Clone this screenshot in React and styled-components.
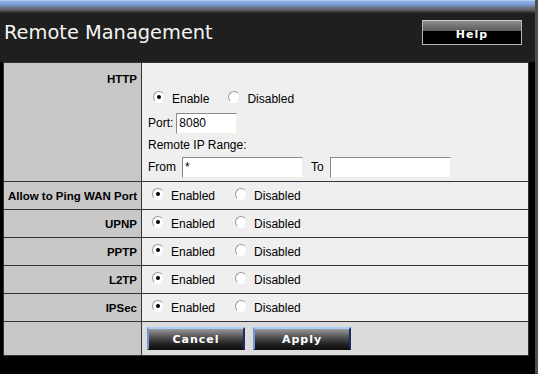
import React from 'react';
import styled, { createGlobalStyle } from 'styled-components';

const Global = createGlobalStyle`
  html, body {
    margin: 0;
    padding: 0;
    background: #000;
  }
  body {
    width: 538px;
    height: 374px;
    overflow: hidden;
    font-family: "Liberation Sans", Arial, sans-serif;
  }
`;

const Screen = styled.div`
  display: flex;
  width: 538px;
  height: 374px;
  background: #000;
`;

const Main = styled.div`
  width: 535px;
  display: flex;
  flex-direction: column;
`;

const Strip = styled.div`
  width: 3px;
  background: repeating-linear-gradient(to bottom, #5a5a5a 0, #5a5a5a 1px, #444 1px, #444 2px);
`;

const TopBand = styled.div`
  height: 13px;
  background: linear-gradient(to bottom, #d8e8d8 0, #8cb0ee 1px, #7d9fdc 4px, #6c7c98 7px, #5e5e62 10px, #3a3a3a 12px, #222 13px);
`;

const Header = styled.div`
  height: 49px;
  background: #1f1f1f;
  display: flex;
  align-items: flex-start;
  justify-content: space-between;
  padding: 0 13px 0 4px;
`;

const Title = styled.h1`
  margin: 8px 0 0;
  font-family: "DejaVu Sans", Verdana, sans-serif;
  font-weight: normal;
  font-size: 19.4px;
  color: #f4f4f4;
`;

const HelpButton = styled.button`
  margin-top: 7px;
  width: 100px;
  height: 25px;
  border: 1px solid #b8b8b8;
  border-top-color: #cfcfcf;
  background: linear-gradient(to bottom, #8c8c8c 0, #5a5a5a 45%, #000 45%, #000 100%);
  color: #fff;
  font-family: "DejaVu Sans", Verdana, sans-serif;
  font-weight: bold;
  font-size: 11px;
  letter-spacing: 1px;
  padding: 3px 0 0;
  cursor: pointer;
`;

const Table = styled.table`
  margin-left: 3px;
  width: 526px;
  border-collapse: collapse;
  border: 1px solid #2a2a2a;
  font-size: 12px;
`;

const Row = styled.tr`
  height: 27px;
`;

const Label = styled.td`
  width: 133px;
  background: #c8c8c8;
  text-align: right;
  vertical-align: ${p => (p.$top ? 'top' : 'middle')};
  padding: ${p => (p.$top ? '10px 4px 0 0' : '0 4px 0 0')};
  font-weight: bold;
  font-size: 11.5px;
  color: #000;
  border: 1px solid #333;
  white-space: nowrap;
`;

const Cell = styled.td`
  background: ${p => (p.$shade ? '#dcdcdc' : '#efefef')};
  border: 1px solid #333;
  padding: ${p => p.$pad || '0 0 0 6px'};
  color: #000;
  vertical-align: middle;
`;

const Options = styled.div`
  display: flex;
  align-items: center;
  height: 27px;
  padding-left: ${p => p.$indent || '3px'};
`;

const Option = styled.label`
  display: inline-flex;
  align-items: center;
  margin-right: ${p => p.$gap || '20px'};
  font-size: 12px;
  color: #000;
`;

const Radio = styled.span`
  box-sizing: border-box;
  width: 12px;
  height: 12px;
  border-radius: 50%;
  border: 1px solid;
  border-color: #9a9a9a #eaeaea #ffffff #9a9a9a;
  background: #fff;
  margin-right: 7px;
  margin-top: -4px;
  display: inline-flex;
  align-items: center;
  justify-content: center;
  &::after {
    content: '';
    width: 4px;
    height: 4px;
    border-radius: 50%;
    background: ${p => (p.$on ? '#000' : 'transparent')};
  }
`;

const Line = styled.div`
  display: flex;
  align-items: center;
  height: ${p => p.$h || '22px'};
  font-size: 12px;
  gap: ${p => p.$gap || '3px'};
`;

const TextBox = styled.input`
  box-sizing: border-box;
  width: ${p => p.$w}px;
  height: 21px;
  border: 1px solid;
  border-color: #8a8a8a #f0f0e0 #f0f0e0 #8a8a8a;
  background: #fff;
  font-family: "Liberation Sans", Arial, sans-serif;
  font-size: 12px;
  padding: 0 2px;
  color: #000;
  outline: none;
`;

const ActionBar = styled.div`
  display: flex;
  gap: 8px;
  padding: 5px 0 5px 5px;
`;

const ActionButton = styled.button`
  width: 98px;
  height: 23px;
  border: 1px solid;
  border-color: #a8d0f8 #1c2a6a #111 #7098d8;
  border-width: 2px 2px 1px 2px;
  background: linear-gradient(to bottom, #9a9a9a 0, #5c5c5c 35%, #222 75%, #111 100%);
  color: #fff;
  font-family: "DejaVu Sans", Verdana, sans-serif;
  font-weight: bold;
  font-size: 11px;
  letter-spacing: 1px;
  padding: 0;
  cursor: pointer;
`;

const services = ['Allow to Ping WAN Port', 'UPNP', 'PPTP', 'L2TP', 'IPSec'];

function Toggle({ on = 'Enabled', off = 'Disabled', indent, gap }) {
  return (
    <Options $indent={indent}>
      <Option $gap={gap}><Radio $on />{on}</Option>
      <Option><Radio />{off}</Option>
    </Options>
  );
}

export default function App() {
  return (
    <Screen>
      <Global />
      <Main>
        <TopBand />
        <Header>
          <Title>Remote Management</Title>
          <HelpButton>Help</HelpButton>
        </Header>
        <Table>
          <tbody>
            <tr>
              <Label $top>HTTP</Label>
              <Cell $pad="22px 0 3px 6px">
                <Toggle on="Enable" indent="5px" gap="19px" />
                <Line>
                  Port: <TextBox $w={61} defaultValue="8080" />
                </Line>
                <Line>Remote IP Range:</Line>
                <Line $gap="6px">
                  From <TextBox $w={121} defaultValue="*" />
                  <span style={{ marginLeft: 2 }}>To</span> <TextBox $w={121} defaultValue="" />
                </Line>
              </Cell>
            </tr>
            {services.map(s => (
              <Row key={s}>
                <Label>{s}</Label>
                <Cell><Toggle indent="4px" /></Cell>
              </Row>
            ))}
            <tr>
              <Label />
              <Cell $shade $pad="0">
                <ActionBar>
                  <ActionButton>Cancel</ActionButton>
                  <ActionButton>Apply</ActionButton>
                </ActionBar>
              </Cell>
            </tr>
          </tbody>
        </Table>
      </Main>
      <Strip />
    </Screen>
  );
}
